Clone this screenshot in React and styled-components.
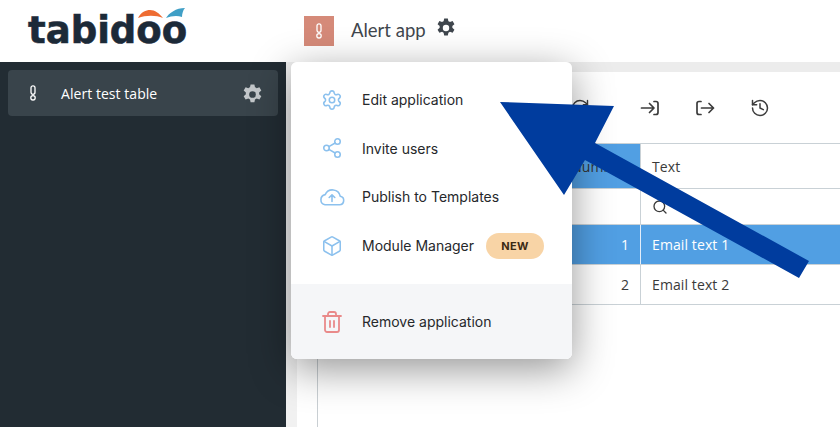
import React from "react";
import styled, { createGlobalStyle } from "styled-components";
import { Settings, Share2, Box, Trash2, RefreshCw, History, Search } from "lucide-react";

const GlobalStyle = createGlobalStyle`
  html, body { margin: 0; padding: 0; background: #fff; }
  body { font-family: "Open Sans", "Liberation Sans", sans-serif; overflow: hidden; }
`;

const Page = styled.div`
  position: relative;
  width: 840px;
  height: 427px;
  overflow: hidden;
  display: flex;
  flex-direction: column;
`;

const Header = styled.header`
  height: 62px;
  flex: none;
  display: flex;
  align-items: center;
  background: #fff;
`;

const LogoArea = styled.div`
  width: 304px;
  flex: none;
  padding-left: 28px;
  box-sizing: border-box;
`;

const Logo = styled.div`
  position: relative;
  width: 158px;
  font-family: "DejaVu Sans", sans-serif;
  font-weight: 700;
  font-size: 37px;
  line-height: 44px;
  color: #1c2a38;
  letter-spacing: 0;
  -webkit-text-stroke: 0.6px #1c2a38;
  white-space: nowrap;
`;

const LogoSwoosh = styled.svg`
  position: absolute;
  left: 108px;
  top: -9px;
`;

const AppBadge = styled.div`
  width: 30px;
  height: 30px;
  display: flex;
  align-items: center;
  justify-content: center;
  background: #d58a79;
  margin-right: 17px;
`;

const AppName = styled.span`
  font-family: "Lato", sans-serif;
  font-size: 18.5px;
  color: #3f464d;
  margin-right: 9px;
  margin-bottom: 3px;
`;

const HeaderGear = styled.span`
  display: flex;
  margin-bottom: 7px;
`;

const Body = styled.div`
  flex: 1;
  display: flex;
  min-height: 0;
`;

const Sidebar = styled.aside`
  width: 286px;
  flex: none;
  background: #222c33;
  padding: 8px;
  box-sizing: border-box;
`;

const SideItem = styled.div`
  height: 46px;
  width: 270px;
  box-sizing: border-box;
  display: flex;
  align-items: center;
  background: #39444b;
  border-radius: 4px;
  color: #fff;
  font-size: 14px;
  letter-spacing: 0.05px;
  padding: 0 14px 0 21px;
`;

const SideGlyph = styled.span`
  width: 32px;
  display: flex;
`;

const SideLabel = styled.span`
  flex: 1;
`;

const SideGear = styled.span`
  display: flex;
  margin-top: 2px;
`;

const Gutter = styled.div`
  width: 11px;
  flex: none;
  background: #f1f1f1;
`;

const Main = styled.main`
  flex: 1;
  display: flex;
  flex-direction: column;
  min-width: 0;
`;

const TopBand = styled.div`
  height: 10px;
  flex: none;
  background: #ececec;
`;

const Toolbar = styled.div`
  height: 71px;
  flex: none;
  display: flex;
  align-items: center;
  justify-content: flex-end;
  gap: 35px;
  padding-right: 70px;
  color: #3c3c3c;
`;

const RefreshSlot = styled.span`
  display: flex;
  margin-right: 15px;
`;

const Table = styled.div`
  flex: 1;
  margin-left: 20px;
  border-left: 1px solid #c9cfd3;
  border-top: 1px solid #c9d1d6;
  display: flex;
  flex-direction: column;
`;

const Row = styled.div`
  height: ${(p) => p.$h}px;
  box-sizing: border-box;
  flex: none;
  display: grid;
  grid-template-columns: 323px 1fr;
  border-bottom: 1px solid #c9d1d6;
  background: ${(p) => (p.$selected ? "#519fe3" : "transparent")};
  color: ${(p) => (p.$selected ? "#fff" : "#3a3a3a")};
  font-size: 14px;
  letter-spacing: 0.1px;
`;

const NumCell = styled.div`
  display: flex;
  align-items: center;
  justify-content: flex-end;
  padding-right: ${(p) => (p.$head ? 14 : 11)}px;
  background: ${(p) => (p.$head ? "#519fe3" : "transparent")};
  color: ${(p) => (p.$head ? "#333" : "inherit")};
  border-right: 1px solid ${(p) => (p.$selected ? "#e3eefa" : "#c9d1d6")};
`;

const TextCell = styled.div`
  display: flex;
  align-items: center;
  padding-left: 11px;
`;

const MenuShadow = styled.div`
  position: absolute;
  left: 291px;
  top: 62px;
  width: 281px;
  height: 297px;
  border-radius: 6px;
  box-shadow: 0 10px 40px rgba(0, 0, 0, 0.42);
`;

const Menu = styled.div`
  position: absolute;
  left: 291px;
  top: 62px;
  width: 281px;
  height: 297px;
  background: #fff;
  border-radius: 6px;
  overflow: hidden;
  display: flex;
  flex-direction: column;
`;

const MenuList = styled.div`
  height: 222px;
  flex: none;
  box-sizing: border-box;
  padding-top: 13.5px;
`;

const MenuItem = styled.div`
  height: 48.6px;
  display: flex;
  align-items: center;
  font-family: "Inter", sans-serif;
  font-size: 14px;
  color: #26282b;
`;

const MenuIcon = styled.span`
  width: 71px;
  flex: none;
  display: flex;
  justify-content: center;
  padding-left: 11px;
  box-sizing: border-box;
  color: ${(p) => p.$color};
`;

const NewTag = styled.span`
  margin-left: 12px;
  width: 58px;
  height: 26px;
  border-radius: 13px;
  background: #f8d4a6;
  color: #3b2a14;
  font-size: 11px;
  font-weight: 700;
  letter-spacing: 0.4px;
  display: flex;
  align-items: center;
  justify-content: center;
`;

const MenuFooter = styled.div`
  flex: 1;
  background: #f5f6f8;
  display: flex;
  align-items: center;
`;

const ArrowLayer = styled.svg`
  position: absolute;
  left: 0;
  top: 0;
  pointer-events: none;
`;

const Gear = ({ size, color }) => (
  <svg width={size} height={size} viewBox="0 0 24 24" fill={color}>
    <path
      fillRule="evenodd"
      d="M10 1.500h4l.6 3c.6.2 1.200.5 1.700.9l2.900-1 2 3.400-2.300 2c.1.700.1 1.300 0 2l2.300 2-2 3.400-2.900-1c-.5.400-1.100.700-1.700.900l-.6 3h-4l-.6-3c-.6-.2-1.200-.5-1.700-.9l-2.900 1-2-3.400 2.300-2c-.1-.7-.1-1.300 0-2l-2.300-2 2-3.400 2.900 1c.5-.4 1.100-.7 1.700-.9l.6-3zM12 8.500a3.500 3.500 0 1 0 0 7 3.500 3.500 0 0 0 0-7z"
    />
  </svg>
);

// outlined exclamation mark used as the app and table icon
const AlertMark = () => (
  <svg width="8" height="16" viewBox="0 0 8 16" fill="none" stroke="#fff" strokeWidth="1.300">
    <rect x="2" y="0.800" width="4" height="8.500" rx="2" />
    <circle cx="4" cy="12.800" r="2.200" />
  </svg>
);

const CloudIcon = () => (
  <svg width="26" height="18" viewBox="0 0 26 18" fill="none" stroke="currentColor" strokeWidth="1.600" strokeLinecap="round" strokeLinejoin="round">
    <path d="M6 16.800h14.500a4.300 4.300 0 0 0 .8-8.500A8 8 0 0 0 6.200 6.600 5.200 5.200 0 0 0 6 16.800z" />
    <path d="M13 13.500V7M10.200 9.500 13 6.800l2.800 2.700" />
  </svg>
);

const EnterIcon = () => (
  <svg width="20" height="20" viewBox="0 0 20 20" fill="none" stroke="currentColor" strokeWidth="1.700" strokeLinecap="round" strokeLinejoin="round">
    <path d="M1.500 10h12M9.500 5.500 14 10l-4.500 4.500" />
    <path d="M14 3.500h2a2 2 0 0 1 2 2v9a2 2 0 0 1-2 2h-2" />
  </svg>
);

const ExitIcon = () => (
  <svg width="20" height="20" viewBox="0 0 20 20" fill="none" stroke="currentColor" strokeWidth="1.700" strokeLinecap="round" strokeLinejoin="round">
    <path d="M6 3.500H4a2 2 0 0 0-2 2v9a2 2 0 0 0 2 2h2" />
    <path d="M6.500 10h12M14 5.500l4.500 4.500-4.500 4.500" />
  </svg>
);

const menuItems = [
  { label: "Edit application", icon: <Settings size={22} strokeWidth={1.7} /> },
  { label: "Invite users", icon: <Share2 size={22} strokeWidth={1.7} /> },
  { label: "Publish to Templates", icon: <CloudIcon /> },
  { label: "Module Manager", icon: <Box size={22} strokeWidth={1.7} />, tag: "NEW" },
];

export default function App() {
  return (
    <Page>
      <GlobalStyle />
      <Header>
        <LogoArea>
          <Logo>
            tabidoo
            <LogoSwoosh width="50" height="20" viewBox="0 0 50 20">
              <path d="M2 18C5 12 10 10 14 10c5 0 9 3 13 8-7-3-17-3-25 0z" fill="#ee6c32" />
              <path d="M30 18c3-5 10-10 19-10-2 2-3 6-3 9-5-2-11-1-16 1z" fill="#3f9fc6" />
            </LogoSwoosh>
          </Logo>
        </LogoArea>
        <AppBadge>
          <AlertMark />
        </AppBadge>
        <AppName>Alert app</AppName>
        <HeaderGear>
          <Gear size={22} color="#3f464d" />
        </HeaderGear>
      </Header>
      <Body>
        <Sidebar>
          <SideItem>
            <SideGlyph>
              <AlertMark />
            </SideGlyph>
            <SideLabel>Alert test table</SideLabel>
            <SideGear>
              <Gear size={23} color="#c3c7ca" />
            </SideGear>
          </SideItem>
        </Sidebar>
        <Gutter />
        <Main>
          <TopBand />
          <Toolbar>
            <RefreshSlot>
              <RefreshCw size={20} strokeWidth={1.7} />
            </RefreshSlot>
            <EnterIcon />
            <ExitIcon />
            <History size={20} strokeWidth={1.8} />
          </Toolbar>
          <Table>
            <Row $h={45}>
              <NumCell $head>Number</NumCell>
              <TextCell>Text</TextCell>
            </Row>
            <Row $h={36}>
              <NumCell />
              <TextCell>
                <Search size={16} strokeWidth={2} />
              </TextCell>
            </Row>
            <Row $h={40} $selected>
              <NumCell $selected>1</NumCell>
              <TextCell>Email text 1</TextCell>
            </Row>
            <Row $h={40}>
              <NumCell>2</NumCell>
              <TextCell>Email text 2</TextCell>
            </Row>
          </Table>
        </Main>
      </Body>
      <MenuShadow />
      <Menu>
        <MenuList>
          {menuItems.map(({ label, icon, tag }) => (
            <MenuItem key={label}>
              <MenuIcon $color="#8cc1ee">{icon}</MenuIcon>
              {label}
              {tag && <NewTag>{tag}</NewTag>}
            </MenuItem>
          ))}
        </MenuList>
        <MenuFooter>
          <MenuItem>
            <MenuIcon $color="#e98a8a">
              <Trash2 size={24} strokeWidth={1.8} />
            </MenuIcon>
            Remove application
          </MenuItem>
        </MenuFooter>
      </Menu>
      <ArrowLayer width="840" height="427" viewBox="0 0 840 427">
        <polygon
          points="500,102 614,106 595,143 809,261 799,278 585,160 564,195"
          fill="#003c9e"
        />
      </ArrowLayer>
    </Page>
  );
}
